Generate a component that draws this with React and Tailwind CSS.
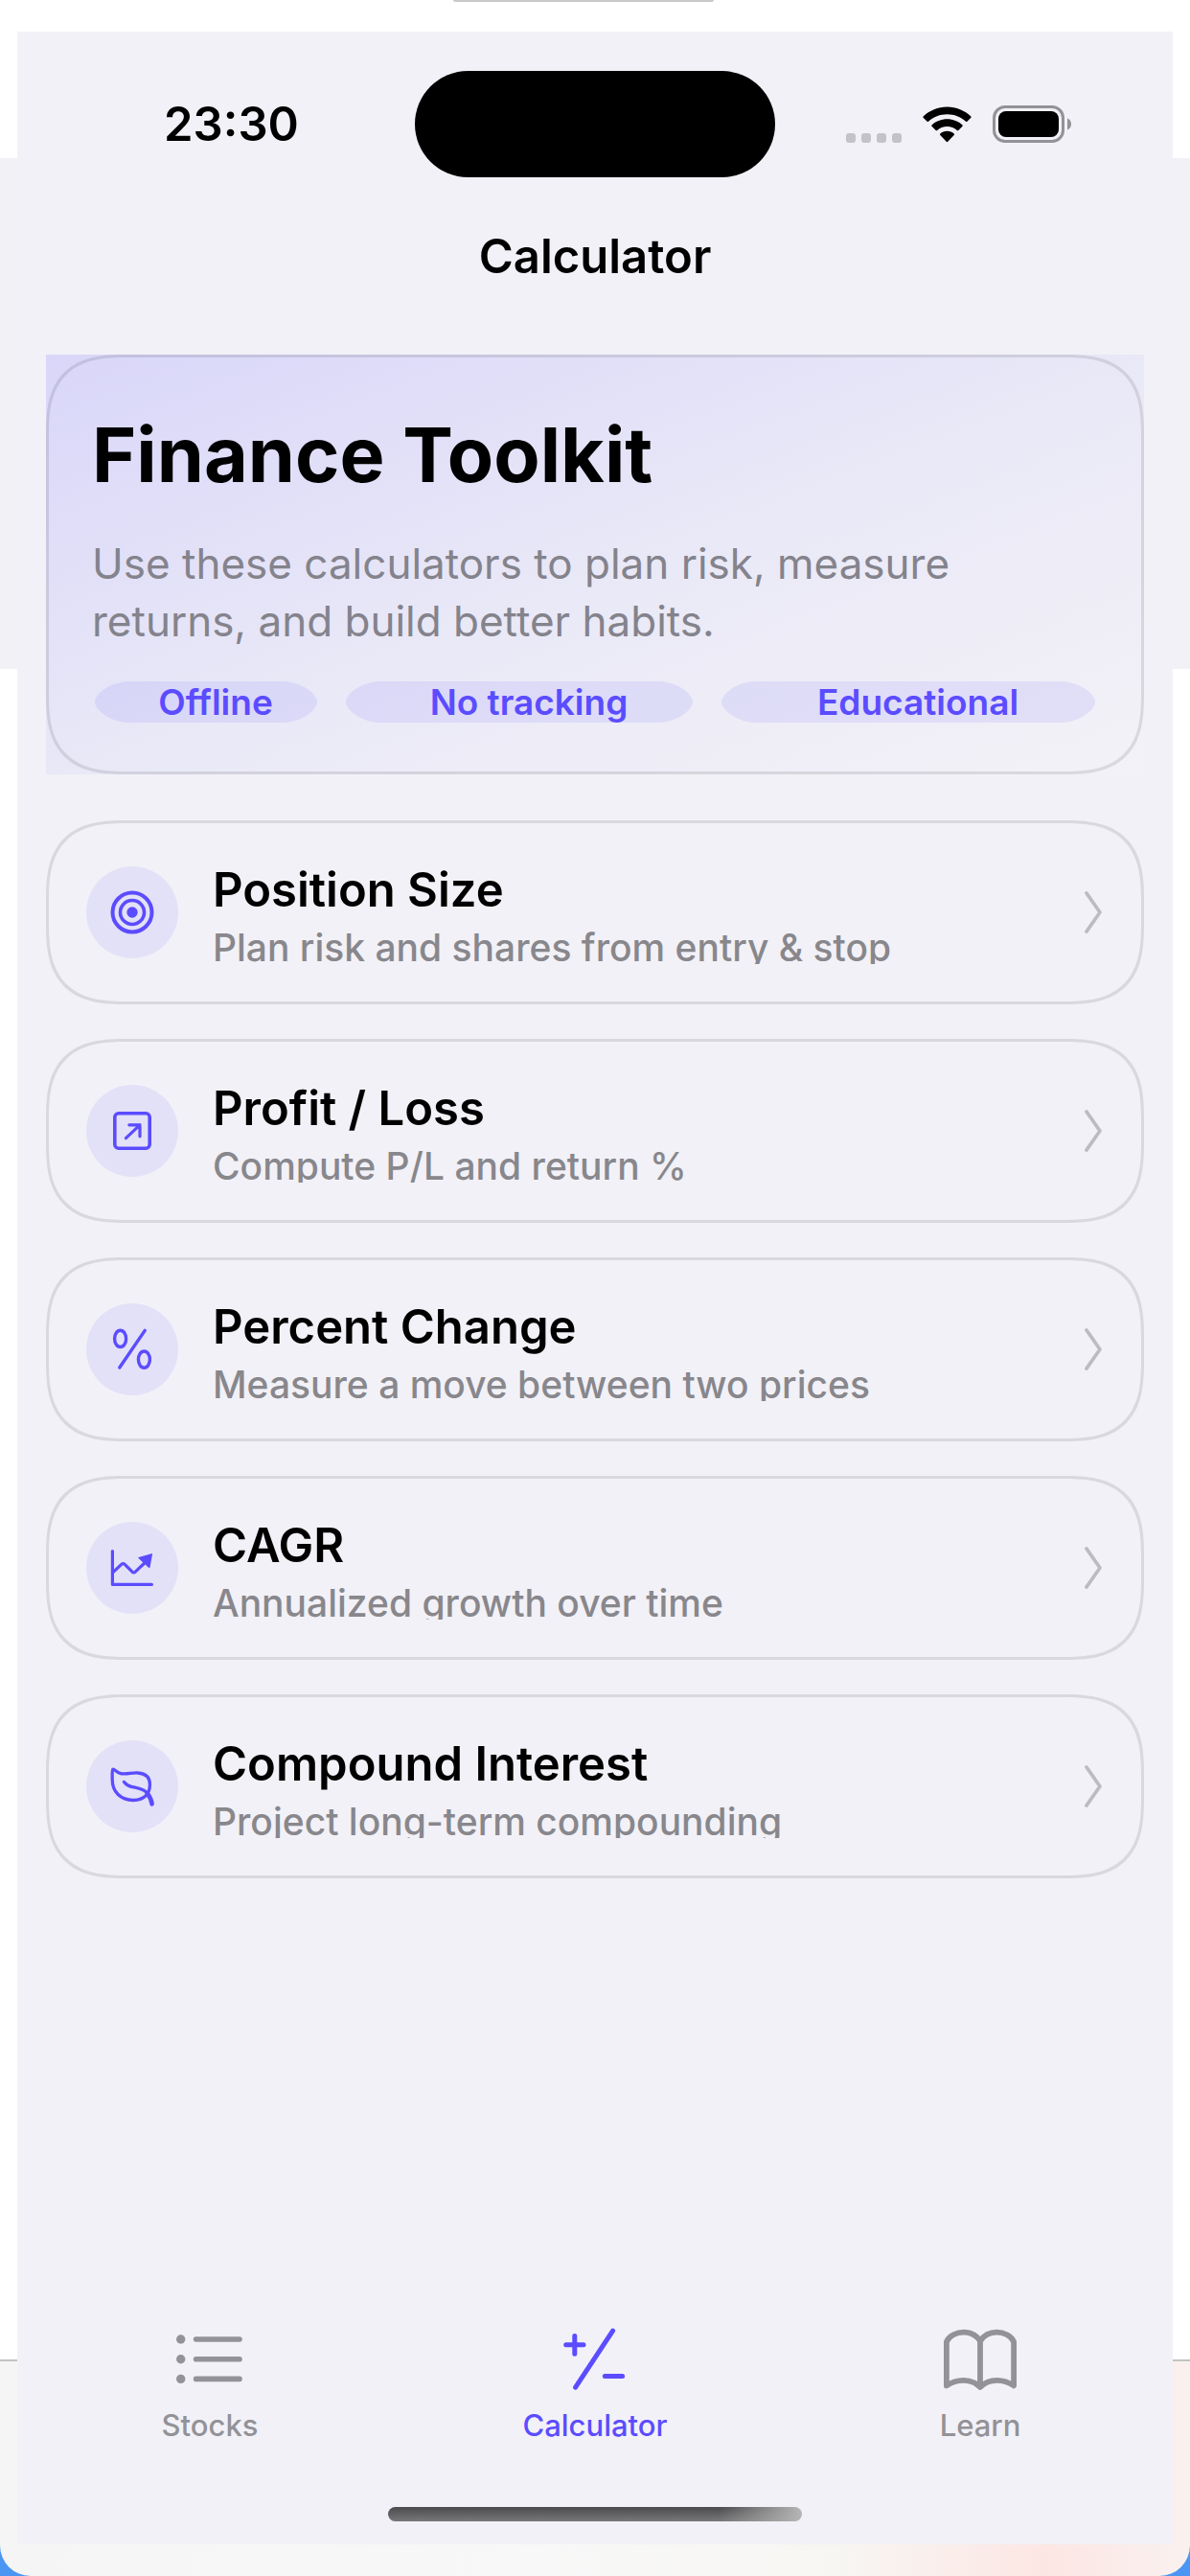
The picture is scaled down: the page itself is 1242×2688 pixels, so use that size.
import { useState } from "react";

const TargetIcon = () => (
  <svg viewBox="0 0 48 48" className="h-12 w-12" fill="none" stroke="currentColor" strokeWidth="4">
    <circle cx="24" cy="24" r="20.5" />
    <circle cx="24" cy="24" r="12.5" strokeWidth="3.6" />
    <circle cx="24" cy="24" r="5.7" fill="currentColor" stroke="none" />
  </svg>
);

const ArrowSquareIcon = () => (
  <svg
    viewBox="0 0 48 48"
    className="h-12 w-12"
    fill="none"
    stroke="currentColor"
    strokeWidth="3.6"
    strokeLinecap="round"
    strokeLinejoin="round"
  >
    <rect x="5.8" y="5.8" width="36.4" height="36.4" rx="4" />
    <path d="M17.4 31.6 32 17.8M20.8 17.8H32V29.8" strokeWidth="3.2" />
  </svg>
);

const PercentIcon = () => (
  <svg
    viewBox="0 0 48 48"
    className="h-12 w-12"
    fill="none"
    stroke="currentColor"
    strokeWidth="3.4"
    strokeLinecap="round"
  >
    <ellipse cx="11.6" cy="12.9" rx="6" ry="8.6" />
    <ellipse cx="36.4" cy="34.6" rx="6" ry="8.6" />
    <path d="M37.2 4.4 10.8 43" />
  </svg>
);

const ChartIcon = () => (
  <svg
    viewBox="0 0 48 48"
    className="h-12 w-12"
    fill="none"
    stroke="currentColor"
    strokeWidth="3.2"
    strokeLinecap="round"
    strokeLinejoin="round"
  >
    <path d="M3.4 6.6V41.4H44.4" />
    <path d="M4 28.6 13 20.2Q14.6 19 16.2 20.4L24 28.2Q25.6 29.6 27.2 28.2L39 17" />
    <path d="M44.3 9.8 31 13.6 41.8 23.4Z" fill="currentColor" strokeWidth="1.4" />
  </svg>
);

const LeafIcon = () => (
  <svg
    viewBox="0 0 48 48"
    className="h-12 w-12"
    fill="none"
    stroke="currentColor"
    strokeWidth="3.3"
    strokeLinecap="round"
    strokeLinejoin="round"
  >
    <path d="M38.8 33.2C35 37.4 30.4 38.5 25 38.5 12 38.3 3.2 30 3.2 17 3.2 12 2.8 7.4 3.9 6.2 5 5.2 7 9.4 12 10.6 18 12 24 9.4 30 10 38 10.6 42.4 15 42.4 22 42.4 26.4 41.2 30.4 38.8 33.2Z" />
    <path d="M15.4 19.4C18 23.4 22 24.2 27 25.2 33 26.4 38.4 28.2 41.4 33" />
    <path d="M39.6 31.2C42 34.4 44 37.6 44.6 42.4" strokeWidth="4.6" />
  </svg>
);

const StocksIcon = () => (
  <svg
    viewBox="0 0 96 72"
    className="h-18 w-24"
    fill="none"
    stroke="currentColor"
    strokeWidth="5.6"
    strokeLinecap="round"
  >
    <path d="M33.6 14H79M33.6 34.7H79M33.6 55.4H79" />
    <g fill="currentColor" stroke="none">
      <circle cx="17.7" cy="14" r="4.7" />
      <circle cx="17.7" cy="34.7" r="4.7" />
      <circle cx="17.7" cy="55.4" r="4.7" />
    </g>
  </svg>
);

const PlusMinusIcon = () => (
  <svg
    viewBox="0 0 96 72"
    className="h-18 w-24"
    fill="none"
    stroke="currentColor"
    strokeWidth="5"
    strokeLinecap="round"
  >
    <path d="M17.7 19.8H36M26.8 10.4V29.2M27.6 64.2 66.6 5.2M58.3 52.4H76.6" />
  </svg>
);

const BookIcon = () => (
  <svg
    viewBox="0 0 96 72"
    className="h-18 w-24"
    fill="none"
    stroke="currentColor"
    strokeWidth="5.8"
    strokeLinecap="round"
    strokeLinejoin="round"
  >
    <path d="M48 15.8C43.6 9.2 37 6.6 30.8 6.6 23.4 6.6 15.4 10.4 12.9 16.6V62.4C18.4 58.6 24.4 56.8 30.6 56.8 37.2 56.8 43.2 59 48 64 52.8 59 58.8 56.8 65.4 56.8 71.6 56.8 77.6 58.6 83.1 62.4V16.6C80.6 10.4 72.6 6.6 65.2 6.6 59 6.6 52.4 9.2 48 15.8ZV63" />
  </svg>
);

const calculators = [
  { title: "Position Size", subtitle: "Plan risk and shares from entry & stop", Icon: TargetIcon },
  { title: "Profit / Loss", subtitle: "Compute P/L and return %", Icon: ArrowSquareIcon },
  { title: "Percent Change", subtitle: "Measure a move between two prices", Icon: PercentIcon },
  { title: "CAGR", subtitle: "Annualized growth over time", Icon: ChartIcon },
  { title: "Compound Interest", subtitle: "Project long-term compounding", Icon: LeafIcon },
];

const tabs = [
  { name: "Stocks", Icon: StocksIcon },
  { name: "Calculator", Icon: PlusMinusIcon },
  { name: "Learn", Icon: BookIcon },
];

const chips = ["Offline", "No tracking", "Educational"];

function StatusBar() {
  return (
    <div className="grid grid-cols-[1fr_376px_1fr] items-center pt-[41px]">
      <span className="pl-8 text-center text-[49px] leading-[60px] font-semibold">23:30</span>
      <div className="h-[111px] rounded-full bg-black" />
      <div className="flex items-center justify-end gap-[22px] pr-[106px]">
        {/* no signal */}
        <svg viewBox="0 0 58 38" className="h-[38px] w-[58px]" fill="#c3c2c8">
          <rect x="0" y="28" width="10" height="10" rx="3" />
          <rect x="16" y="28" width="10" height="10" rx="3" />
          <rect x="32" y="28" width="10" height="10" rx="3" />
          <rect x="48" y="28" width="10" height="10" rx="3" />
        </svg>
        <svg viewBox="0 0 51 38" className="h-[38px] w-[51px]">
          <path d="M25.5 0.5C35 0.5 44 4.4 50.4 10.4Q51 11 50.4 11.7L46.4 15.8Q45.8 16.4 45 15.8C39.6 11 33 8.3 25.5 8.3S11.4 11 6 15.8Q5.2 16.4 4.6 15.8L.6 11.7Q0 11 .6 10.4C7 4.4 16 .5 25.5 .5Z" />
          <path d="M25.5 13.2C31.6 13.2 37.2 15.5 41.5 19.4Q42.2 20 41.5 20.8L37.3 25Q36.6 25.6 35.9 25C33 22.5 29.5 21 25.5 21S18 22.5 15.1 25Q14.4 25.6 13.7 25L9.5 20.8Q8.8 20 9.5 19.4C13.8 15.5 19.4 13.2 25.5 13.2Z" />
          <path d="M25.5 25.8C28.3 25.8 30.8 26.8 32.7 28.5Q33.4 29.2 32.7 29.9L26.3 36.8Q25.5 37.6 24.7 36.8L18.3 29.9Q17.6 29.2 18.3 28.5C20.2 26.8 22.7 25.8 25.5 25.8Z" />
        </svg>
        <svg viewBox="0 0 82 39" className="h-[39px] w-[82px]">
          <rect x="1.5" y="1.5" width="72" height="36" rx="11.5" fill="none" stroke="#939297" strokeWidth="3" />
          <rect x="6" y="6" width="63" height="27" rx="8" />
          <path d="M78 13.5C80.6 14.5 82 16.8 82 19.5S80.6 24.5 78 25.5Z" fill="#939297" />
        </svg>
      </div>
    </div>
  );
}

function CalculatorRow({ title, subtitle, Icon }) {
  return (
    <a
      href="#"
      className="flex items-center gap-9 rounded-[84px] border-3 border-[#d9d8dd] py-[39px] pr-[41px] pl-[39px] [corner-shape:superellipse(1.45)]"
    >
      <span className="flex h-24 w-24 shrink-0 items-center justify-center rounded-full bg-[#e3e1f7] text-[#5b4cff]">
        <Icon />
      </span>
      <span className="min-w-0 flex-1">
        <span className="block text-[49px] leading-[62px] font-semibold">{title}</span>
        <span className="block h-[46px] overflow-hidden text-[39px] leading-[58px] font-medium whitespace-nowrap text-[#88878c]">
          {subtitle}
        </span>
      </span>
      <svg
        viewBox="0 0 18 44"
        className="h-11 w-[18px] shrink-0"
        fill="none"
        stroke="#bcbbc0"
        strokeWidth="3.6"
        strokeLinecap="round"
        strokeLinejoin="round"
      >
        <path d="M1.9 1.9 16 22 1.9 42.1" />
      </svg>
    </a>
  );
}

export default function App() {
  const [activeTab, setActiveTab] = useState("Calculator");

  return (
    <div className="bg-[#4b96f3] font-[Inter,'Liberation_Sans',sans-serif] text-black">
      <div className="flex min-h-screen flex-col rounded-b-[32px] bg-[linear-gradient(to_top,transparent_224px,#c2c2c2_224px,#c2c2c2_226px,transparent_226px),linear-gradient(to_top,transparent_225px,#fff_225px,#fff_1990px,#f2f1f6_1990px,#f2f1f6_2523px,#fff_2523px),linear-gradient(to_right,#f5f5f5,#f8f8f8_45%,#f7f6f3_70%,#fce6e3_88%,#f9f1ef)] px-[18px] pb-[33px]">
        <div className="pr-6">
          <div className="mx-auto h-[2px] w-[272px] rounded-b-full bg-[#c8c8c8]" />
        </div>

        <div className="mt-[31px] flex flex-1 flex-col bg-[#f2f1f7]">
          <StatusBar />

          <h1 className="mt-[51px] text-center text-[49px] leading-[64px] font-semibold">
            Calculator
          </h1>

          <main className="mt-[70px] px-[30px]">
            <section className="bg-linear-to-br from-[#d9d6f9] via-[#e9e8f7] to-[#f3f2f7]">
              <div className="rounded-[84px] border-3 border-black/10 px-[45px] pt-[53px] pb-[51px] [corner-shape:superellipse(1.45)]">
                <h2 className="text-[79px] leading-[96px] font-bold">Finance Toolkit</h2>
                <p className="mt-9 max-w-[980px] text-[44px] leading-[60px] text-[#84838c]">
                  Use these calculators to plan risk, measure returns, and build better habits.
                </p>
                <div className="mx-[3px] mt-[33px] grid grid-cols-[232fr_362fr_390fr] gap-[30px]">
                  {chips.map((chip) => (
                    <span
                      key={chip}
                      className="rounded-[36px/22px] bg-[#5b4cff]/10 pl-5 text-center text-[37px] leading-[43px] font-semibold text-[#5b4cff] [corner-shape:superellipse(0.8)]"
                    >
                      {chip}
                    </span>
                  ))}
                </div>
              </div>
            </section>

            <div className="mt-12 flex flex-col gap-9">
              {calculators.map((item) => (
                <CalculatorRow key={item.title} {...item} />
              ))}
            </div>
          </main>

          <nav className="mt-auto grid grid-cols-3">
            {tabs.map(({ name, Icon }) => (
              <button
                key={name}
                type="button"
                onClick={() => setActiveTab(name)}
                className={
                  activeTab === name
                    ? "flex flex-col items-center gap-[14px] text-[#5b4cff]"
                    : "flex flex-col items-center gap-[14px] text-[#929297]"
                }
              >
                <Icon />
                <span className="text-[31px] leading-9 font-medium">{name}</span>
              </button>
            ))}
          </nav>

          {/* home indicator */}
          <div className="mx-auto mt-[67px] mb-6 h-[15px] w-[432px] rounded-full bg-[linear-gradient(to_right,transparent_80%,#b5b5b5),linear-gradient(#4a4a4c,#78787a)]" />
        </div>
      </div>
    </div>
  );
}
